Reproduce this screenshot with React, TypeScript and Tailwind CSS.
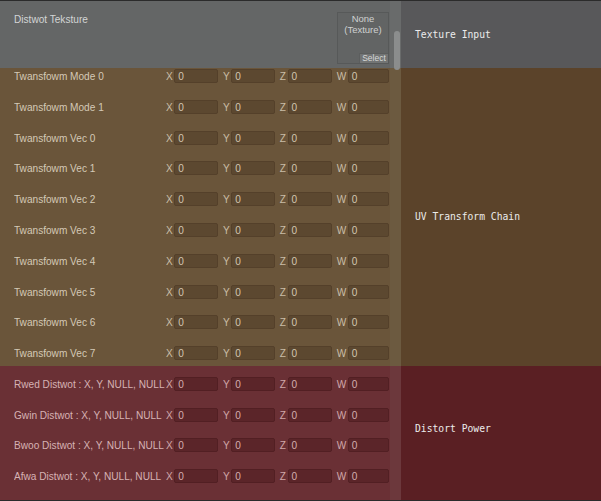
import React from 'react';

type Theme = {
  bg: string;
  side: string;
  text: string;
  axis: string;
  field: string;
};

const brown: Theme = {
  bg: 'bg-[#6a553a]',
  side: 'bg-[#5b432a]',
  text: 'text-[#d4c9b6]',
  axis: 'text-[#c9bda7]',
  field: 'bg-[#5c4830] border-[#54402a] text-[#d2c6b0]',
};

const red: Theme = {
  bg: 'bg-[#6a3035]',
  side: 'bg-[#5a1f23]',
  text: 'text-[#d6b2b4]',
  axis: 'text-[#cfa7a9]',
  field: 'bg-[#5b2529] border-[#521f23] text-[#d4adaf]',
};

const transformRows = [
  'Twansfowm Mode 0',
  'Twansfowm Mode 1',
  'Twansfowm Vec 0',
  'Twansfowm Vec 1',
  'Twansfowm Vec 2',
  'Twansfowm Vec 3',
  'Twansfowm Vec 4',
  'Twansfowm Vec 5',
  'Twansfowm Vec 6',
  'Twansfowm Vec 7',
];

const distortRows = [
  'Rwed Distwot : X, Y, NULL, NULL',
  'Gwin Distwot : X, Y, NULL, NULL',
  'Bwoo Distwot : X, Y, NULL, NULL',
  'Afwa Distwot : X, Y, NULL, NULL',
];

const VectorRow = ({ label, theme, height }: { label: string; theme: Theme; height: string }) => (
  <div className={`flex items-start pl-[14px] ${height}`}>
    <div className={`flex h-[15px] w-[152px] items-center overflow-hidden whitespace-nowrap ${theme.text}`}>{label}</div>
    <div className="grid w-[223px] grid-cols-4 gap-[4.7px]">
      {['X', 'Y', 'Z', 'W'].map((axis) => (
        <div key={axis} className="flex h-[14px] items-center gap-[1.5px]">
          <span className={`pt-[1px] ${theme.axis}`}>{axis}</span>
          <div className={`flex h-full flex-1 items-center rounded-[2px] border pl-[3px] pt-[1px] ${theme.field}`}>0</div>
        </div>
      ))}
    </div>
  </div>
);

const SideLabel = ({ children }: { children: React.ReactNode }) => (
  <span className="pl-[14px] font-['DejaVu_Sans_Mono',monospace] text-[9.7px] text-[#ececec]">{children}</span>
);

export default function App() {
  return (
    <div className="flex h-[501px] w-[601px] flex-col overflow-hidden border-t border-b border-[#2b2b2b] bg-[#2b2b2b] font-['Liberation_Sans',Arial,sans-serif] text-[10.1px]">
      {/* texture input */}
      <div className="flex h-[67px] shrink-0">
        <div className="flex w-[390px] items-start justify-between bg-[#646666] pl-[14px] pt-[11px]">
          <span className="pt-[1px] leading-[14px] text-[#d3d5d5]">Distwot Teksture</span>
          <div className="mr-[1px] flex h-[52px] w-[52px] flex-col border border-[#575959] bg-[#626464]">
            <div className="flex flex-1 flex-col items-center pt-[1px] text-[9.5px] leading-[10.5px] text-[#cfd1d1]">
              <span>None</span>
              <span>(Texture)</span>
            </div>
            <div className="flex justify-end">
              <span className="h-[10px] w-[29px] border-t border-l border-[#5c5e5e] bg-[#727474] text-center text-[8.5px] leading-[9px] text-[#d6d8d8]">Select</span>
            </div>
          </div>
        </div>
        <div className="relative w-[11px] bg-[#696b6b]">
          <div className="absolute top-[30px] left-[4px] z-10 h-[39px] w-[6px] rounded-[3px] bg-[#8b8d8d]" />
        </div>
        <div className="flex flex-1 items-center bg-[#58585a] pt-px">
          <SideLabel>Texture Input</SideLabel>
        </div>
      </div>

      {/* uv transform */}
      <div className="flex h-[298px] shrink-0">
        <div className={`w-[390px] overflow-hidden pt-px ${brown.bg}`}>
          {transformRows.map((r) => (
            <VectorRow key={r} label={r} theme={brown} height="h-[30.8px]" />
          ))}
        </div>
        <div className="w-[11px] bg-[#6c5a40]" />
        <div className={`flex flex-1 items-center ${brown.side}`}>
          <SideLabel>UV Transform Chain</SideLabel>
        </div>
      </div>

      {/* distort */}
      <div className="flex h-[134px] shrink-0">
        <div className={`w-[390px] overflow-hidden pt-[11px] ${red.bg}`}>
          {distortRows.map((r) => (
            <VectorRow key={r} label={r} theme={red} height="h-[30.67px]" />
          ))}
        </div>
        <div className="w-[11px] bg-[#6c383c]" />
        <div className={`flex flex-1 items-center pb-[8px] ${red.side}`}>
          <SideLabel>Distort Power</SideLabel>
        </div>
      </div>
    </div>
  );
}
